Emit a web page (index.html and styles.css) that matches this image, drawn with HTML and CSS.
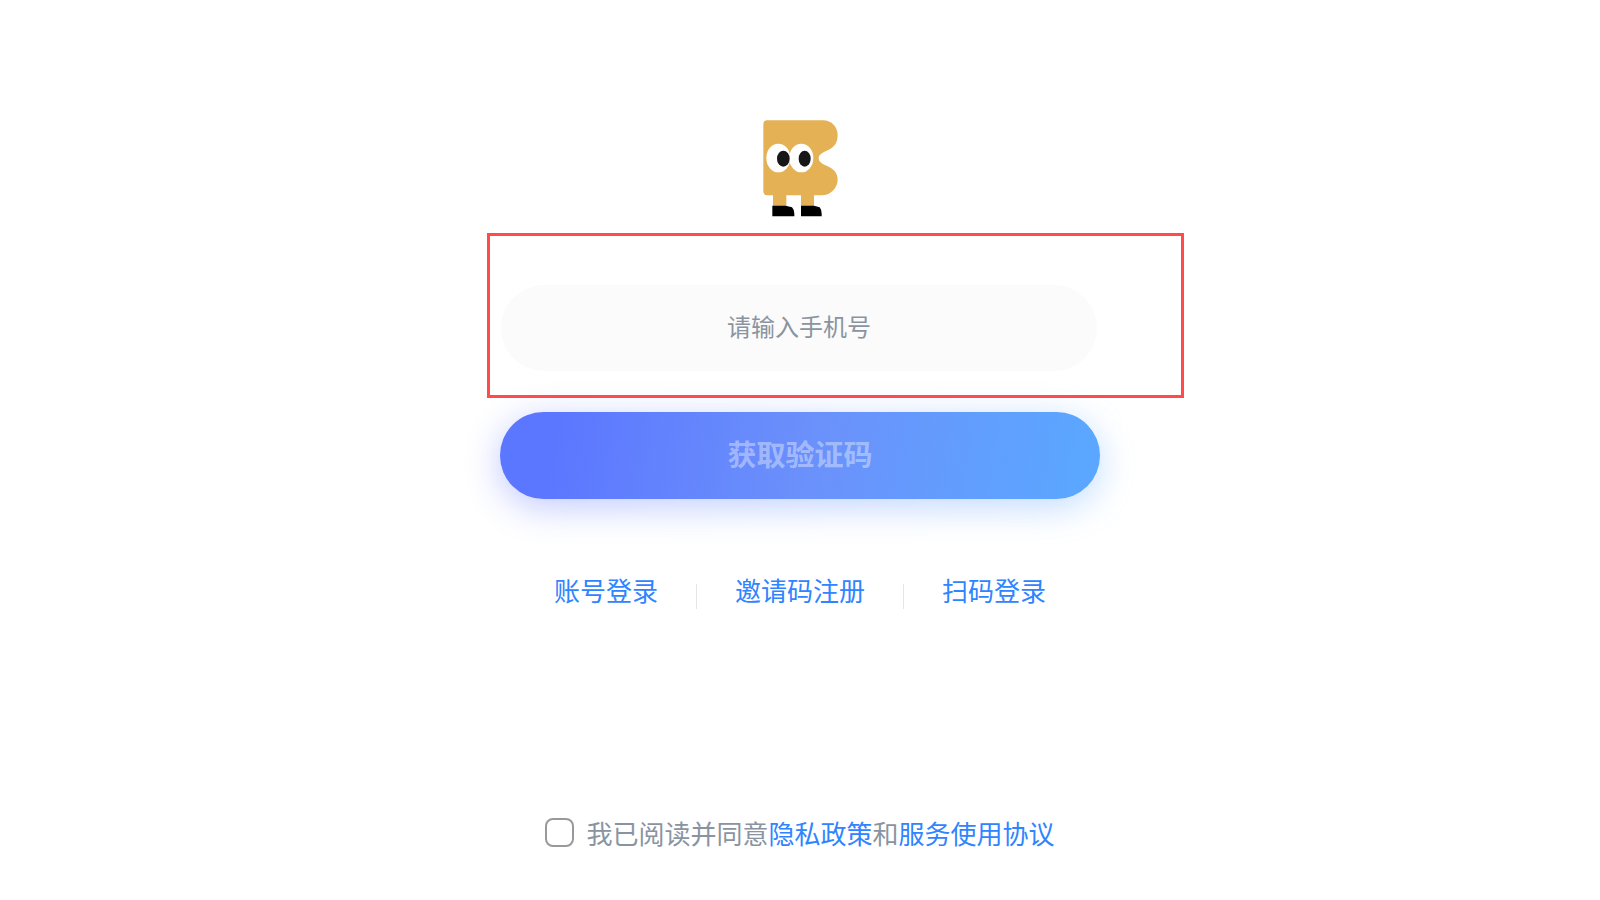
FILE: index.html
```html
<!DOCTYPE html>
<html lang="zh-CN">
<head>
<meta charset="utf-8">
<meta name="viewport" content="width=device-width, initial-scale=1">
<title>登录</title>
<link rel="stylesheet" href="styles.css">
</head>
<body>
<main class="login">
  <svg class="logo" viewBox="70 59 225 291" role="img" aria-label="Logo">
    <path fill="#e4b155" d="M80 60H250C276 60 294 80 294 105C294 129 281 143 264 150C252 155 237 162 237 174C237 186 251 192 264 198C281 205 294 218 294 238C294 264 271 285 246 285H223V317H184V285H140V317H100V285H82Q71 283 71 271V73Q71 61 80 60Z"/>
    <ellipse cx="116" cy="173" rx="36" ry="43" fill="#fff"/>
    <ellipse cx="185" cy="173" rx="36" ry="43" fill="#fff"/>
    <ellipse cx="131" cy="175" rx="19" ry="24" fill="#171717"/>
    <ellipse cx="195" cy="175" rx="18" ry="24" fill="#171717"/>
    <path fill="#000" d="M98 316H138L157 321Q164 328 164 340V348H98ZM184 316H223L240 321Q246 328 246 340V348H184Z"/>
  </svg>
  <form class="form">
    <div class="field">
      <input class="phone" type="tel" placeholder="请输入手机号" aria-label="请输入手机号">
      <div class="highlight"></div>
    </div>
    <div class="submit-wrap">
      <button class="submit" type="button">获取验证码</button>
    </div>
  </form>
  <nav class="links">
    <a class="link" href="#">账号登录</a>
    <span class="divider"></span>
    <a class="link" href="#">邀请码注册</a>
    <span class="divider"></span>
    <a class="link" href="#">扫码登录</a>
  </nav>
  <div class="agreement">
    <input class="check" type="checkbox" id="agree">
    <label class="terms" for="agree">我已阅读并同意<a class="link" href="#">隐私政策</a>和<a class="link" href="#">服务使用协议</a></label>
  </div>
</main>
</body>
</html>
```

FILE: styles.css
```css
* {
  box-sizing: border-box;
}

body {
  margin: 0;
  background: #fff;
  font-family: "Noto Sans CJK SC", sans-serif;
  font-size: 26px;
  line-height: 38px;
  color: #8a94a1;
}

.login {
  display: flex;
  flex-direction: column;
  align-items: center;
  min-height: 100vh;
  padding: 120px 24px 48px;
}

.logo {
  width: 75px;
  height: 97px;
}

.form {
  width: 100%;
  max-width: 600px;
  margin-top: 68px;
}

.field {
  position: relative;
  z-index: 1;
  padding: 0 3px 0 1px;
}

.phone {
  display: block;
  width: 100%;
  height: 86px;
  padding: 0 40px 6px;
  border: 0;
  border-radius: 43px;
  background: #fbfbfb;
  font: inherit;
  font-size: 24px;
  text-align: center;
  color: #333;
}

.phone::placeholder {
  color: #8a94a1;
  opacity: 1;
}

/* Callout frame laid over the phone field */
.highlight {
  position: absolute;
  top: -52px;
  right: -84px;
  bottom: -27px;
  left: -13px;
  border: 3px solid #ff4b4b;
  pointer-events: none;
}

.submit-wrap {
  position: relative;
  isolation: isolate;
  margin-top: 41px;
}

.submit-wrap::before {
  content: "";
  position: absolute;
  inset: 8px 0 -8px;
  z-index: -1;
  border-radius: 44px;
  background: linear-gradient(100deg, #5b6cff, #5ba6ff);
  filter: blur(18px);
  opacity: 0.38;
}

.submit {
  display: block;
  width: 100%;
  height: 87px;
  padding: 0 0 6px;
  border: 0;
  border-radius: 44px;
  background: linear-gradient(100deg, #5b76ff 8%, #6b91fb 52%, #5ba6ff 95%);
  font: inherit;
  font-size: 29px;
  font-weight: 700;
  color: rgba(255, 255, 255, 0.4);
}

.links {
  display: flex;
  align-items: center;
  gap: 38px;
  margin-top: 72px;
}

.link {
  color: #2f84ff;
  text-decoration: none;
}

.divider {
  width: 1px;
  height: 25px;
  margin-top: 12px;
  background: #e5e5e5;
}

.agreement {
  display: flex;
  align-items: center;
  gap: 12px;
  margin-top: auto;
}

.check {
  appearance: none;
  flex: none;
  width: 29px;
  height: 29px;
  margin: 0 0 2px;
  border: 2px solid #999;
  border-radius: 8px;
  background: #fff;
}
```
